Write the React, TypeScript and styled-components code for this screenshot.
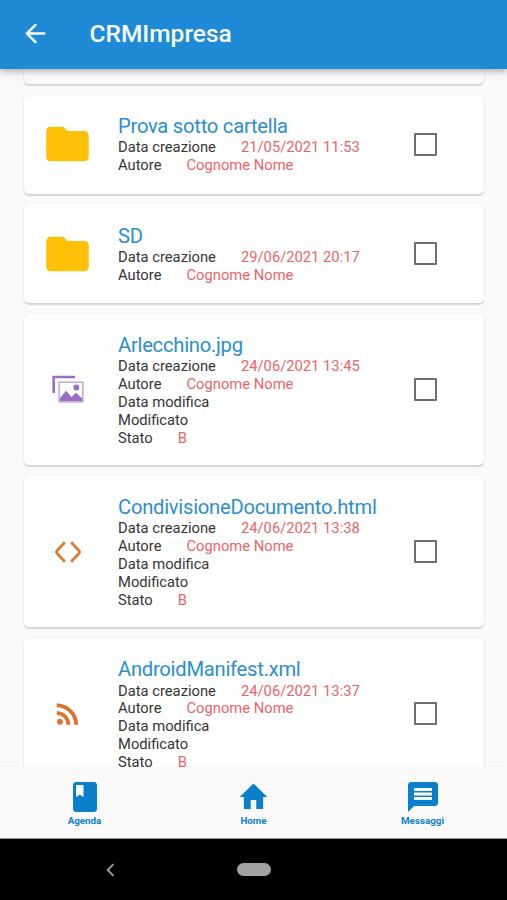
import React from "react";
import styled, { createGlobalStyle } from "styled-components";

const GlobalStyle = createGlobalStyle`
  * { box-sizing: border-box; }
  html, body { margin: 0; padding: 0; overflow: hidden; }
  body { font-family: Roboto, "Liberation Sans", sans-serif; background: #fafafa; }
  svg { display: block; flex: none; }
`;

const Screen = styled.div`
  width: 507px;
  height: 900px;
  display: flex;
  flex-direction: column;
  overflow: hidden;
  background: #fafafa;
`;

const AppBar = styled.header`
  position: relative;
  z-index: 1;
  flex: none;
  height: 69px;
  display: flex;
  align-items: center;
  padding: 0 0 3px 21px;
  background: #1f8bd6;
  color: #f7fcff;
  box-shadow: 0 2px 5px rgba(0, 0, 0, 0.2), 0 4px 10px rgba(0, 0, 0, 0.13);
`;

const AppTitle = styled.h1`
  margin: 1px 0 0 39.5px;
  font-size: 24.5px;
  line-height: 30px;
  font-weight: 500;
`;

const List = styled.main`
  flex: 1;
  min-height: 0;
  overflow: hidden;
  display: flex;
  flex-direction: column;
  gap: 10.5px;
  padding: 0 23px 0 24px;
`;

const cardShadow = "0 1.5px 1.5px rgba(0,0,0,0.14), 0 0 2px rgba(0,0,0,0.08)";

const PreviousCard = styled.div`
  flex: none;
  height: 15px;
  border-radius: 0 0 5px 5px;
  background: #fdfdfd;
  box-shadow: ${cardShadow};
`;

const Card = styled.article<{ $tall: boolean }>`
  flex: none;
  height: ${(p) => (p.$tall ? 151.7 : 99)}px;
  display: grid;
  grid-template-columns: 87.5px minmax(0, 1fr) 117px;
  align-items: center;
  border-radius: 5px;
  background: #fff;
  box-shadow: ${cardShadow};
`;

const IconCell = styled.div`
  display: flex;
  justify-content: center;
`;

const Details = styled.div`
  align-self: start;
  padding: 19.5px 0 0 6.5px;
  white-space: nowrap;
`;

const FileName = styled.h2`
  margin: 0;
  height: 24.2px;
  font-size: 20.2px;
  line-height: 25px;
  font-weight: 400;
  letter-spacing: -0.25px;
  color: #2b8ed0;
`;

const Field = styled.div`
  display: flex;
  height: 17.9px;
  gap: 25px;
  font-size: 14.75px;
  line-height: 18px;
  color: #353535;
`;

const Value = styled.span`
  color: #ed6468;
`;

const CheckCell = styled.div`
  display: flex;
  justify-content: center;
`;

const Checkbox = styled.button`
  width: 23px;
  height: 23px;
  padding: 0;
  border: 2px solid #707070;
  border-radius: 1px;
  background: transparent;
`;

const BottomNav = styled.nav`
  position: relative;
  flex: none;
  height: 72px;
  display: grid;
  grid-template-columns: repeat(3, 1fr);
  background: #fafafa;
  border-bottom: 1px solid #969696;
  box-shadow: 0 0 2px rgba(0, 0, 0, 0.06);
`;

const NavItem = styled.a`
  display: flex;
  flex-direction: column;
  align-items: center;
  padding-top: 12px;
  color: #0a7fcb;
  font-size: 9.8px;
  line-height: 12px;
  font-weight: 700;
`;

const NavIcon = styled.span`
  height: 36px;
`;

const SystemBar = styled.footer`
  flex: none;
  height: 61px;
  display: grid;
  grid-template-columns: 1fr 35px 1fr;
  align-items: center;
  background: #000;
`;

const BackKey = styled.div`
  padding-left: 105px;
`;

const HomeKey = styled.div`
  height: 13px;
  border-radius: 7px;
  background: #a2a2a2;
  margin-left: 0.5px;
`;

const FolderIcon = () => (
  <svg width="51" height="52" viewBox="0 0 24 24" preserveAspectRatio="none" fill="#ffc107">
    <path d="M10 4H4c-1.1 0-1.99.9-1.99 2L2 18c0 1.1.9 2 2 2h16c1.1 0 2-.9 2-2V8c0-1.1-.9-2-2-2h-8l-2-2z" />
  </svg>
);

const GalleryIcon = () => (
  <svg width="32" height="28" viewBox="0 0 32 28">
    <path d="M1.7 18V2H23" fill="none" stroke="#9a6fc3" strokeWidth="2.6" />
    <rect x="7.1" y="7.1" width="23.8" height="19.8" fill="#fff" stroke="#a98acb" strokeWidth="1.1" />
    <circle cx="24.3" cy="12.6" r="3" fill="#9a6fc3" />
    <path d="M8 26v-3l6-7.3 5.5 6.4 4.4-4.7 6.4 6.2V26z" fill="#9a6fc3" />
  </svg>
);

const CodeIcon = () => (
  <svg width="28" height="22" viewBox="0 0 28 22" fill="none" stroke="#dd7a2d" strokeWidth="2.8">
    <path d="M10.8 1.2 3 9.6Q1.9 11 3 12.4l7.8 8.4M17.2 1.2 25 9.6q1.1 1.4 0 2.8l-7.8 8.4" />
  </svg>
);

const FeedIcon = () => (
  <svg width="33" height="33" viewBox="0 0 24 24" fill="#dc7331">
    <circle cx="6.5" cy="18" r="2.18" />
    <path d="M4.2 4.64v2.83c7.03 0 12.73 5.7 12.73 12.73h2.83c0-8.59-6.97-15.56-15.56-15.56zm0 5.66v2.83c3.9 0 7.07 3.17 7.07 7.07h2.83c0-5.47-4.43-9.9-9.9-9.9z" />
  </svg>
);

const icons = { folder: FolderIcon, image: GalleryIcon, code: CodeIcon, feed: FeedIcon };

type Entry = { kind: keyof typeof icons; name: string; created: string };

const entries: Entry[] = [
  { kind: "folder", name: "Prova sotto cartella", created: "21/05/2021 11:53" },
  { kind: "folder", name: "SD", created: "29/06/2021 20:17" },
  { kind: "image", name: "Arlecchino.jpg", created: "24/06/2021 13:45" },
  { kind: "code", name: "CondivisioneDocumento.html", created: "24/06/2021 13:38" },
  { kind: "feed", name: "AndroidManifest.xml", created: "24/06/2021 13:37" },
];

function EntryCard({ entry }: { entry: Entry }) {
  const Icon = icons[entry.kind];
  const isFile = entry.kind !== "folder";
  return (
    <Card $tall={isFile}>
      <IconCell><Icon /></IconCell>
      <Details>
        <FileName>{entry.name}</FileName>
        <Field>Data creazione<Value>{entry.created}</Value></Field>
        <Field>Autore<Value>Cognome Nome</Value></Field>
        {isFile && (
          <>
            <Field>Data modifica</Field>
            <Field>Modificato</Field>
            <Field>Stato<Value>B</Value></Field>
          </>
        )}
      </Details>
      <CheckCell><Checkbox aria-label={entry.name} /></CheckCell>
    </Card>
  );
}

export default function App() {
  return (
    <Screen>
      <GlobalStyle />
      <AppBar>
        <svg width="29" height="29" viewBox="0 0 24 24" fill="none" stroke="currentColor" strokeWidth="2" strokeLinecap="round">
          <path d="M19.2 12H5M12 4.9 4.9 12l7.1 7.1" />
        </svg>
        <AppTitle>CRMImpresa</AppTitle>
      </AppBar>
      <List>
        <PreviousCard />
        {entries.map((entry) => <EntryCard key={entry.name} entry={entry} />)}
      </List>
      <BottomNav>
        <NavItem>
          <NavIcon>
            <svg width="36" height="36" viewBox="0 0 24 24" fill="currentColor">
              <path d="M18 2H6c-1.1 0-2 .9-2 2v16c0 1.1.9 2 2 2h12c1.1 0 2-.9 2-2V4c0-1.1-.9-2-2-2zM6 4h5v8l-2.5-1.5L6 12V4z" />
            </svg>
          </NavIcon>
          Agenda
        </NavItem>
        <NavItem>
          <NavIcon>
            <svg width="33" height="36" viewBox="0 0 24 24" preserveAspectRatio="none" fill="currentColor">
              <path d="M10 20v-6h4v6h5v-8h3L12 3 2 12h3v8z" />
            </svg>
          </NavIcon>
          Home
        </NavItem>
        <NavItem>
          <NavIcon>
            <svg width="36" height="36" viewBox="0 0 24 24" fill="currentColor">
              <path d="M20 2H4c-1.1 0-1.99.9-1.99 2L2 22l4-4h14c1.1 0 2-.9 2-2V4c0-1.1-.9-2-2-2zm-2 12H6v-2h12v2zm0-3H6V9h12v2zm0-3H6V6h12v2z" />
            </svg>
          </NavIcon>
          Messaggi
        </NavItem>
      </BottomNav>
      <SystemBar>
        <BackKey>
          <svg width="10" height="14" viewBox="0 0 10 14" fill="none" stroke="#a2a2a2" strokeWidth="1.8">
            <path d="M8.5 1.2 2.7 7l5.8 5.8" />
          </svg>
        </BackKey>
        <HomeKey />
      </SystemBar>
    </Screen>
  );
}
